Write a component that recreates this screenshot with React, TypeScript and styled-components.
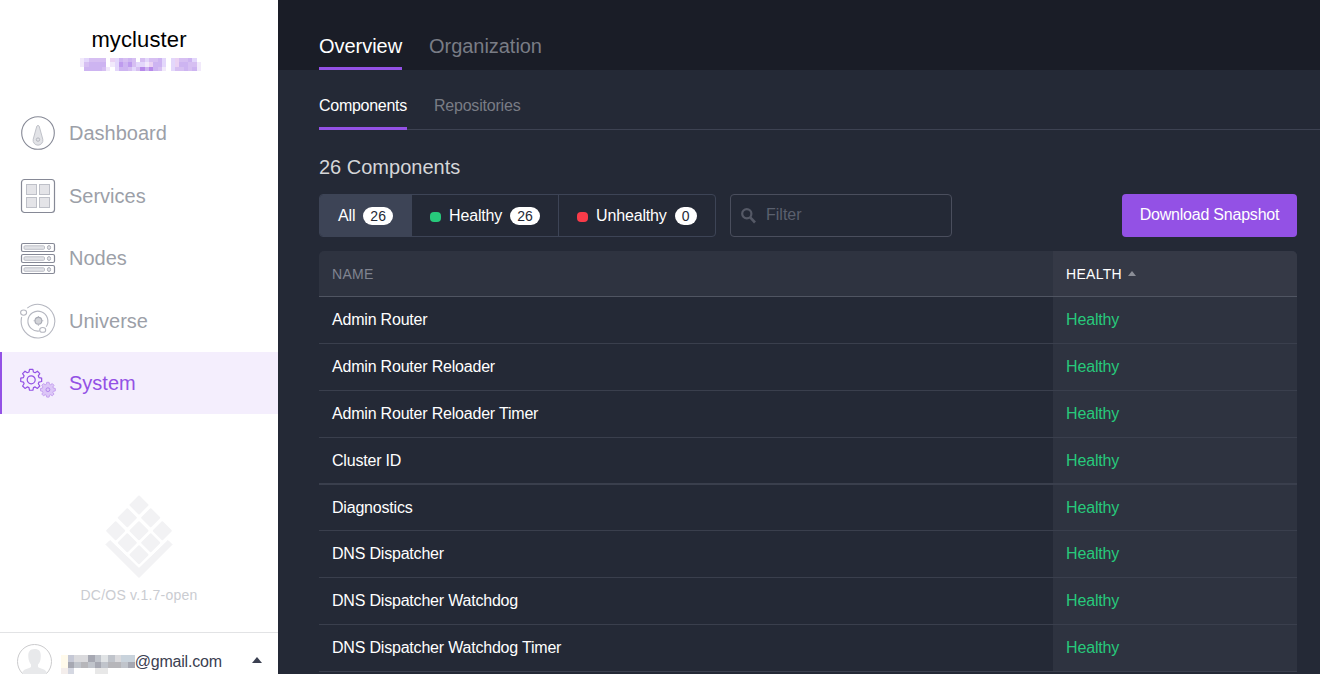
import React from "react";
import styled, { createGlobalStyle } from "styled-components";

const GlobalStyle = createGlobalStyle`
  *, *::before, *::after { box-sizing: border-box; }
  body { margin: 0; overflow: hidden; font-family: "Liberation Sans", Arial, sans-serif; font-size: 16px; }
`;

const Page = styled.div`
  display: flex;
  height: 674px;
  overflow: hidden;
  background: #242936;
`;

const Sidebar = styled.aside`
  width: 278px;
  flex: none;
  display: flex;
  flex-direction: column;
  background: #fff;
`;

const ClusterHeader = styled.header`
  height: 102px;
  flex: none;
  display: flex;
  flex-direction: column;
  align-items: center;
  padding: 27px 0 0 3px;
`;

const ClusterName = styled.h1`
  margin: 0 0 5px;
  padding-right: 3px;
  font-size: 22px;
  line-height: 26px;
  font-weight: 400;
  letter-spacing: 0.12px;
  color: #000;
`;

const MosaicArt = styled.svg<{ $top?: number }>`
  display: block;
  flex: none;
  margin-top: ${(p) => p.$top ?? 0}px;
`;

const Nav = styled.nav`
  height: 312px;
  flex: none;
  display: grid;
  grid-template-rows: 62px 63px 62px 63px 62px;
`;

const NavItem = styled.a<{ $active?: boolean }>`
  display: flex;
  align-items: center;
  gap: 13px;
  padding-left: 18px;
  border-left: 2px solid ${(p) => (p.$active ? "#9351e5" : "transparent")};
  background: ${(p) => (p.$active ? "#f4eefd" : "transparent")};
  color: ${(p) => (p.$active ? "#9351e5" : "#9c9fa8")};
  font-size: 20px;
  line-height: 24px;
`;

const NavIcon = styled.svg`
  width: 36px;
  height: 36px;
  flex: none;
  fill: none;
`;

const Brand = styled.div`
  flex: 1;
  display: flex;
  flex-direction: column;
  align-items: center;
  padding-top: 81px;
`;

const Version = styled.div`
  margin-top: 7px;
  font-size: 14px;
  line-height: 18px;
  letter-spacing: 0.23px;
  color: #caccd1;
`;

const Account = styled.footer`
  height: 42px;
  flex: none;
  display: flex;
  align-items: flex-start;
  border-top: 1px solid #e2e3e5;
  padding: 11px 16px 0 17px;
  overflow: hidden;
`;

const AvatarArt = styled.svg`
  flex: none;
  margin-right: 9px;
`;

const Email = styled.span`
  padding-top: 9px;
  line-height: 18px;
  letter-spacing: -0.2px;
  color: #3b4051;
`;

const Spacer = styled.span`
  flex: 1;
`;

const Caret = styled.span<{ $size: number; $color: string; $top?: number }>`
  width: 0;
  height: 0;
  margin-top: ${(p) => p.$top ?? 0}px;
  border-left: ${(p) => p.$size}px solid transparent;
  border-right: ${(p) => p.$size}px solid transparent;
  border-bottom: ${(p) => p.$size + 1}px solid ${(p) => p.$color};
`;

const Main = styled.main`
  flex: 1;
  min-width: 0;
`;

const PrimaryTabs = styled.nav`
  height: 70px;
  display: flex;
  align-items: flex-end;
  gap: 27px;
  padding-left: 41px;
  background: #1a1d27;
`;

const PrimaryTab = styled.a<{ $active?: boolean }>`
  height: 37px;
  border-bottom: 3px solid ${(p) => (p.$active ? "#9351e5" : "transparent")};
  color: ${(p) => (p.$active ? "#fff" : "#797c85")};
  font-size: 20px;
  letter-spacing: -0.04px;
  line-height: 26px;
`;

const SecondaryTabs = styled.nav`
  height: 60px;
  margin-left: 41px;
  display: flex;
  align-items: flex-end;
  gap: 27px;
  box-shadow: inset 0 -1px #3d4252;
`;

const SecondaryTab = styled.a<{ $active?: boolean }>`
  height: 34px;
  border-bottom: 3px solid ${(p) => (p.$active ? "#9351e5" : "transparent")};
  color: ${(p) => (p.$active ? "#fff" : "#797c85")};
  letter-spacing: ${(p) => (p.$active ? "-0.28px" : "-0.2px")};
  line-height: 20px;
`;

const Content = styled.section`
  padding: 25px 23px 0 41px;
`;

const Title = styled.h2`
  margin: 0 0 15px;
  font-size: 20px;
  line-height: 24px;
  font-weight: 400;
  color: #d5d6d9;
`;

const Toolbar = styled.div`
  height: 43px;
  display: flex;
  margin-bottom: 14px;
`;

const FilterGroup = styled.div`
  width: 397px;
  display: flex;
  border: 1px solid #3d4456;
  border-radius: 4px;
  overflow: hidden;
  margin-right: 14px;
`;

const FilterButton = styled.button<{ $active?: boolean; $width: number }>`
  width: ${(p) => p.$width}px;
  display: flex;
  align-items: center;
  padding: 1px 0 0 18px;
  border: 0;
  border-right: 1px solid #3d4456;
  background: ${(p) => (p.$active ? "#3d4456" : "transparent")};
  color: #fff;
  font: inherit;
  letter-spacing: -0.15px;
  &:last-child { border-right: 0; }
`;

const Dot = styled.span<{ $color: string }>`
  width: 11px;
  height: 10px;
  margin: 2px 8px 0 0;
  border-radius: 4px;
  background: ${(p) => p.$color};
`;

const Badge = styled.span`
  height: 18px;
  margin-left: 8px;
  padding: 0 7px;
  border-radius: 9px;
  background: #fff;
  color: #242936;
  font-size: 14px;
  letter-spacing: 0;
  line-height: 18px;
`;

const SearchField = styled.label`
  width: 222px;
  display: flex;
  align-items: center;
  gap: 10px;
  padding: 0 10px;
  border: 1px solid #4a4e5d;
  border-radius: 4px;
`;

const SearchInput = styled.input`
  width: 160px;
  padding: 0 0 1px;
  border: 0;
  outline: 0;
  background: transparent;
  color: #fff;
  font: inherit;
  &::placeholder { color: #5b606e; opacity: 1; }
`;

const PrimaryButton = styled.button`
  width: 175px;
  padding: 0 0 1px;
  border: 0;
  border-radius: 4px;
  background: #9351e5;
  color: #fff;
  font: inherit;
  letter-spacing: -0.22px;
`;

const Table = styled.div`
  border-radius: 5px 5px 0 0;
  overflow: hidden;
`;

const Row = styled.div<{ $height?: number; $rule?: number }>`
  height: ${(p) => p.$height ?? 47}px;
  display: grid;
  grid-template-columns: 734px 244px;
  border-bottom: ${(p) => p.$rule ?? 1}px solid #3a3f4d;
`;

const HeadRow = styled(Row)`
  height: 46px;
  border-bottom-color: #505562;
  background: #2e3340;
  font-size: 14px;
`;

const HeadCell = styled.div<{ $sorted?: boolean }>`
  display: flex;
  align-items: center;
  gap: 6px;
  padding-left: 13px;
  background: ${(p) => (p.$sorted ? "#353946" : "transparent")};
  color: ${(p) => (p.$sorted ? "#fff" : "#808490")};
  letter-spacing: 0.3px;
`;

const NameCell = styled.div`
  padding: 13px 0 0 13px;
  line-height: 20px;
  letter-spacing: -0.2px;
  color: #fff;
`;

const HealthCell = styled(NameCell)`
  background: #2e3340;
  color: #27c97b;
  letter-spacing: -0.15px;
`;

const TONES: Record<string, string> = {
  a: "#f1e9fb", b: "#e3d7fb", c: "#d6bff2", d: "#cdb4f1", e: "#be9bee", f: "#b78aea", g: "#ead2f3",
  p: "#fffaeb", q: "#c5c8d5", r: "#a6a8b2", s: "#dadadd", t: "#c0c4cb", u: "#e0e3e5", v: "#c9d3dc", w: "#b6b6ba", x: "#f4eeec", y: "#e8e8e8", z: "#d5d8e2",
};

function Mosaic({ rows, cw, ch, label, top }: { rows: string[]; cw: number; ch: number; label: string; top?: number }) {
  const width = rows[0].length * cw;
  const height = rows.length * ch;
  return (
    <MosaicArt $top={top} width={width} height={height} role="img" aria-label={label} shapeRendering="crispEdges">
      {rows.flatMap((row, y) =>
        [...row].map((tone, x) =>
          TONES[tone] ? <rect key={`${x}-${y}`} x={x * cw} y={y * ch} width={cw} height={ch} fill={TONES[tone]} /> : null
        )
      )}
    </MosaicArt>
  );
}

function gearPath(cx: number, cy: number, outer: number, inner: number) {
  const points: string[] = [];
  for (let i = 0; i < 8; i++) {
    const a = (i * Math.PI) / 4;
    const at = (r: number, o: number) => `${(cx + r * Math.sin(a + o)).toFixed(2)} ${(cy - r * Math.cos(a + o)).toFixed(2)}`;
    points.push(at(inner, -0.28), at(outer, -0.16), at(outer, 0.16), at(inner, 0.28));
  }
  return `M${points.join("L")}Z`;
}

const DashboardIcon = () => (
  <NavIcon viewBox="0 0 36 36">
    <circle cx="18" cy="18" r="16.3" stroke="#868996" strokeWidth="1.1" />
    <path d="M16.8 11.2Q18 9.4 19.2 11.2L22.8 24.3A4.9 4.9 0 1 1 13.2 24.3Z" fill="#e2e3e7" stroke="#c0c2c9" />
    <circle cx="18" cy="24.6" r="1.7" stroke="#b5b7bf" />
  </NavIcon>
);

const ServicesIcon = () => (
  <NavIcon viewBox="0 0 36 36">
    <rect x="1.5" y="1.5" width="33" height="33" rx="3" stroke="#868996" strokeWidth="1.2" />
    {[6.5, 19.5].map((x) =>
      [6.5, 19.5].map((y) => <rect key={`${x}${y}`} x={x} y={y} width="10" height="10" fill="#e4e4e8" stroke="#bec0c8" />)
    )}
  </NavIcon>
);

const NodesIcon = () => (
  <NavIcon viewBox="0 0 36 36">
    {[3.5, 14.5, 25.5].map((y) => (
      <g key={y}>
        <rect x="1.5" y={y} width="33" height="8" rx="1.5" stroke="#868996" strokeWidth="1.2" />
        <rect x="4" y={y + 2.3} width="20.5" height="3.5" rx="1" fill="#e2e3e7" stroke="#bec0c8" />
        <ellipse cx="29" cy={y + 4} rx="1.6" ry="2" fill="#e2e3e7" stroke="#aeb0b9" />
      </g>
    ))}
  </NavIcon>
);

const UniverseIcon = () => (
  <NavIcon viewBox="0 0 36 36" stroke="#b5b7c0" strokeWidth="1.1">
    <path d="M7.3 5.2A16.8 16.8 0 1 1 1.7 14" />
    <path d="M19.5 28A10 10 0 1 1 26.2 23.7" />
    <ellipse cx="3.6" cy="9.6" rx="3" ry="2.6" />
    <ellipse cx="22.7" cy="26.9" rx="3" ry="2.4" />
    <circle cx="18.4" cy="17.8" r="3.4" fill="#d3d4d9" stroke="#a7a9b3" />
    <path d="M18.4 13v1.5M18.4 21.2v1.5M13.6 17.8h1.5M21.8 17.8h1.5" />
  </NavIcon>
);

const SystemIcon = () => (
  <NavIcon viewBox="0 0 36 36" stroke="#9351e5" strokeLinejoin="round">
    <path d={gearPath(11.2, 14.8, 10.6, 8.1)} strokeWidth="1.2" />
    <circle cx="11.2" cy="14.8" r="4" strokeWidth="1.2" />
    <path d={gearPath(27.9, 24.7, 7.5, 5.7)} fill="#dcc6f7" stroke="#c5a0f0" />
    <circle cx="27.9" cy="24.7" r="1.9" stroke="#b384ed" />
  </NavIcon>
);

const Logo = () => (
  <svg width="68" height="84" viewBox="0 0 68 84" fill="#f2f2f4">
    {[[34, 10], [22.3, 22.7], [45.7, 22.7], [10.7, 35.7], [34, 35.7], [57.3, 35.7], [22.3, 47.7], [45.7, 47.7], [34, 59.7]].map(([x, y]) => (
      <path key={`${x}-${y}`} d={`M${x} ${y - 8.5}l8.5 8.5l-8.5 8.5l-8.5 -8.5Z`} stroke="#f2f2f4" strokeWidth="2" strokeLinejoin="round" />
    ))}
    <path d="M1 49.5L5 45.5L34 73.5L63 45.5L67 49.5L34 82.5Z" stroke="#f2f2f4" strokeLinejoin="round" />
  </svg>
);

const NAV = [
  { label: "Dashboard", Icon: DashboardIcon },
  { label: "Services", Icon: ServicesIcon },
  { label: "Nodes", Icon: NodesIcon },
  { label: "Universe", Icon: UniverseIcon },
  { label: "System", Icon: SystemIcon, active: true },
];

const COMPONENTS: { name: string; height?: number; rule?: number }[] = [
  { name: "Admin Router" },
  { name: "Admin Router Reloader" },
  { name: "Admin Router Reloader Timer" },
  { name: "Cluster ID", rule: 2 },
  { name: "Diagnostics", height: 46 },
  { name: "DNS Dispatcher" },
  { name: "DNS Dispatcher Watchdog" },
  { name: "DNS Dispatcher Watchdog Timer" },
];

export default function App() {
  return (
    <Page>
      <GlobalStyle />
      <Sidebar>
        <ClusterHeader>
          <ClusterName>mycluster</ClusterName>
          <Mosaic
            label="Cluster address"
            cw={4.32}
            ch={4.33}
            rows={["abcccc.gbdcdc.cbccdb.bgccdb.", "acdddd.abedecbbagddb.bgddcca", ".ddddca.bddcbcfdfdca.bccdcda"]}
          />
        </ClusterHeader>
        <Nav>
          {NAV.map(({ label, Icon, active }) => (
            <NavItem key={label} $active={active}>
              <Icon />
              {label}
            </NavItem>
          ))}
        </Nav>
        <Brand>
          <Logo />
          <Version>DC/OS v.1.7-open</Version>
        </Brand>
        <Account>
          <AvatarArt width="35" height="35" viewBox="0 0 35 35">
            <circle cx="17.5" cy="17.5" r="17" fill="#fff" stroke="#cbcbcd" />
            <path d="M17.5 5C12.5 5 11 8.5 11.3 12.5C11.5 17 13 19 14 20.5V23C11 25 6 25 5 29Q17.5 38 30 29C29 25 24 25 21 23V20.5C22.5 19 23.7 17 23.8 12.5C24 8 22.5 5 17.5 5Z" fill="#e8e9eb" />
          </AvatarArt>
          <Mosaic label="Account name" top={11} cw={6.7} ch={6.5} rows={["pqssrtutsvv", "prtwtrtwwtr", "xz...yy...."]} />
          <Email>@gmail.com</Email>
          <Spacer />
          <Caret $size={5.5} $color="#3b4051" $top={13} />
        </Account>
      </Sidebar>
      <Main>
        <PrimaryTabs>
          <PrimaryTab $active>Overview</PrimaryTab>
          <PrimaryTab>Organization</PrimaryTab>
        </PrimaryTabs>
        <SecondaryTabs>
          <SecondaryTab $active>Components</SecondaryTab>
          <SecondaryTab>Repositories</SecondaryTab>
        </SecondaryTabs>
        <Content>
          <Title>26 Components</Title>
          <Toolbar>
            <FilterGroup>
              <FilterButton $active $width={92}>All<Badge>26</Badge></FilterButton>
              <FilterButton $width={147}><Dot $color="#27c97b" />Healthy<Badge>26</Badge></FilterButton>
              <FilterButton $width={156}><Dot $color="#f83b49" />Unhealthy<Badge>0</Badge></FilterButton>
            </FilterGroup>
            <SearchField>
              <svg width="15" height="17" viewBox="0 0 15 17" fill="none" stroke="#555966" strokeWidth="2.2">
                <circle cx="5.8" cy="6.8" r="4.6" />
                <path d="M9.2 10.4L14 15.5" strokeWidth="2.6" />
              </svg>
              <SearchInput placeholder="Filter" />
            </SearchField>
            <Spacer />
            <PrimaryButton>Download Snapshot</PrimaryButton>
          </Toolbar>
          <Table>
            <HeadRow>
              <HeadCell>NAME</HeadCell>
              <HeadCell $sorted>HEALTH<Caret $size={4.5} $color="#8b8e97" /></HeadCell>
            </HeadRow>
            {COMPONENTS.map(({ name, height, rule }) => (
              <Row key={name} $height={height} $rule={rule}>
                <NameCell>{name}</NameCell>
                <HealthCell>Healthy</HealthCell>
              </Row>
            ))}
          </Table>
        </Content>
      </Main>
    </Page>
  );
}
